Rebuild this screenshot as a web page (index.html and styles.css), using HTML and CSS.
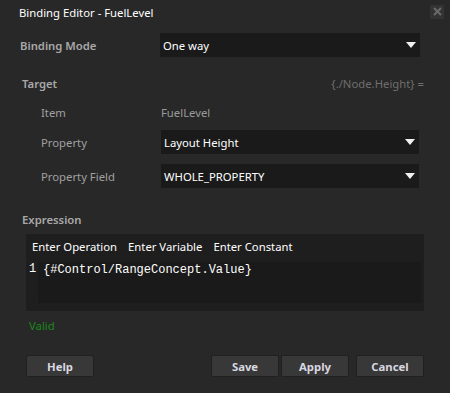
FILE: index.html
```html
<!DOCTYPE html>
<html lang="en">
<head>
    <meta charset="UTF-8">
    <title>Binding Editor - FuelLevel</title>
    <link rel="stylesheet" href="styles.css">
</head>
<body>
    <div class="dialog">
        <header class="title-bar">
            <span class="title">Binding Editor - FuelLevel</span>
            <button class="close-btn" aria-label="Close">
                <svg width="9" height="9" viewBox="0 0 9 9">
                    <path d="M1 1 L8 8 M8 1 L1 8" stroke="#6a6a6a" stroke-width="2"/>
                </svg>
            </button>
        </header>

        <div class="row mode-row">
            <span class="label strong">Binding Mode</span>
            <div class="select">One way<span class="arrow"></span></div>
        </div>

        <div class="target-head">
            <span class="label strong">Target</span>
            <span class="path">{./Node.Height} =</span>
        </div>

        <div class="row sub item-row">
            <span class="label">Item</span>
            <span class="value">FuelLevel</span>
        </div>
        <div class="row sub prop-row">
            <span class="label">Property</span>
            <div class="select">Layout Height<span class="arrow"></span></div>
        </div>
        <div class="row sub field-row">
            <span class="label">Property Field</span>
            <div class="select">WHOLE_PROPERTY<span class="arrow"></span></div>
        </div>

        <div class="expr-head label strong">Expression</div>
        <div class="expr-box">
            <div class="expr-tools">
                <span>Enter Operation</span>
                <span>Enter Variable</span>
                <span>Enter Constant</span>
            </div>
            <div class="code">
                <span class="gutter">1</span>
                <div class="code-area">{#Control/RangeConcept.Value}</div>
            </div>
        </div>
        <div class="status">Valid</div>

        <footer class="buttons">
            <button class="btn">Help</button>
            <div class="spacer"></div>
            <button class="btn">Save</button>
            <button class="btn">Apply</button>
            <button class="btn cancel">Cancel</button>
        </footer>
    </div>
</body>
</html>
```

FILE: styles.css
```css
* {
    margin: 0;
    padding: 0;
    box-sizing: border-box;
}

body {
    width: 450px;
    height: 393px;
    background: #282828;
    font-family: "Noto Sans", "Open Sans", sans-serif;
    font-size: 11.3px;
    line-height: 17px;
    color: #fff;
    overflow: hidden;
}

.dialog {
    padding: 0 26px 0 20px;
}

/* Title bar */
.title-bar {
    height: 24px;
    display: flex;
    align-items: center;
    justify-content: space-between;
    margin-right: -20px;
}

.title {
    color: #fff;
    margin-left: -1px;
}

.close-btn {
    width: 14px;
    height: 14px;
    background: #333;
    border: none;
    display: flex;
    align-items: center;
    justify-content: center;
    margin-top: -1px;
}

/* Rows */
.row {
    display: flex;
    align-items: center;
    height: 24px;
}

.mode-row {
    margin-top: 9px;
}

.mode-row .select {
    margin-right: 4px;
}

.label {
    width: 140px;
    color: #a0a0a0;
}

.label.strong {
    font-weight: 600;
    color: #a8a8a8;
}

.sub {
    padding-left: 21px;
}

.sub .label {
    width: 120px;
}

.sub .select {
    margin-right: 5px;
}

.item-row {
    margin-top: 8px;
}

.prop-row {
    margin-top: 6px;
}

.field-row {
    margin-top: 10px;
}

.value {
    color: #9a9a9a;
}

.select {
    flex: 1;
    height: 24px;
    background: #1a1a1a;
    color: #fff;
    display: flex;
    align-items: center;
    justify-content: space-between;
    padding: 0 4px 0 3px;
}

.arrow {
    width: 0;
    height: 0;
    border-left: 5px solid transparent;
    border-right: 5px solid transparent;
    border-top: 6px solid #f0f0f0;
}

.target-head {
    display: flex;
    justify-content: space-between;
    margin-top: 18px;
    padding-left: 2px;
}

.path {
    color: #6e6e6e;
}

/* Expression */
.expr-head {
    margin-top: 23px;
    padding-left: 2px;
}

.expr-box {
    margin: 6px 0 0 6px;
    background: #1e1e1e;
    height: 77px;
    padding: 3px 3px 8px 3px;
    display: flex;
    flex-direction: column;
}

.expr-tools {
    display: flex;
    gap: 11px;
    height: 18px;
    align-items: center;
    padding-left: 3px;
}

.code {
    flex: 1;
    display: flex;
    margin-top: 7px;
    font-family: "Liberation Mono", monospace;
    font-size: 12px;
    line-height: 14px;
}

.gutter {
    width: 9px;
    text-align: left;
    color: #fff;
}

.code-area {
    flex: 1;
    background: #1a1a1a;
    padding: 1px 0 0 5px;
}

.status {
    color: #1a8a1a;
    margin: 6px 0 0 9px;
}

/* Buttons */
.buttons {
    display: flex;
    margin: 21px 0 0 6px;
    gap: 2px;
}

.spacer {
    flex: 1;
}

.btn {
    width: 68px;
    height: 22px;
    background: #383838;
    border: 1px solid #202020;
    border-radius: 2px;
    color: #d8d8e0;
    font-family: "Noto Sans", sans-serif;
    font-weight: 700;
    font-size: 11.3px;
}

.cancel {
    margin-left: 5px;
}
```
